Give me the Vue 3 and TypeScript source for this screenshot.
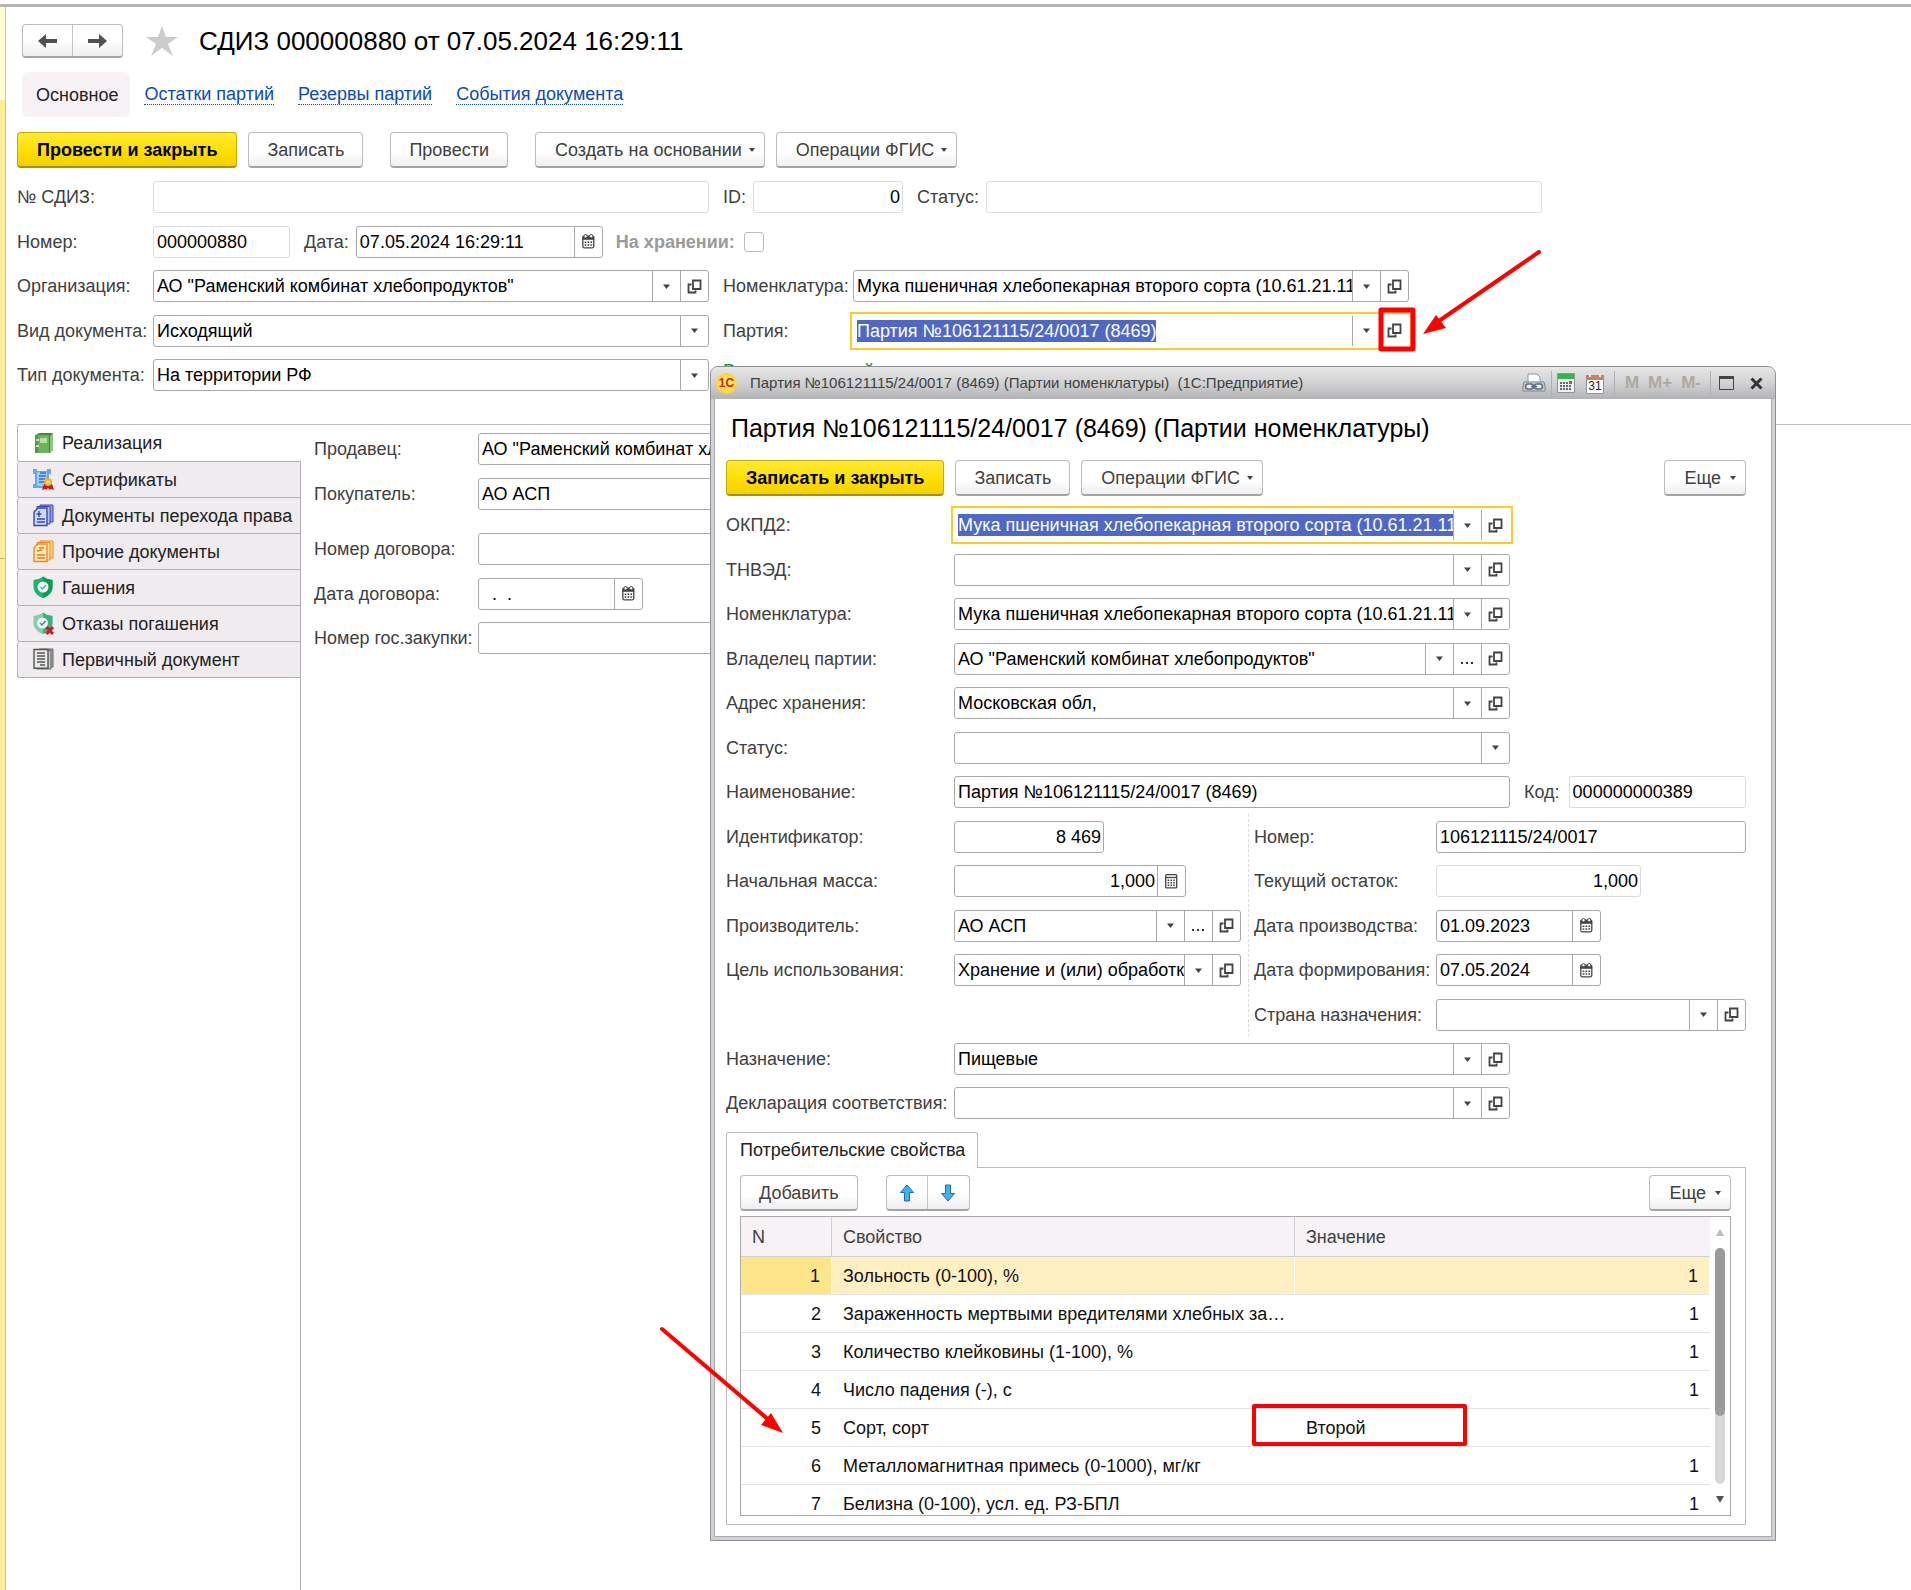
<script setup lang="ts">
import { defineComponent, h, ref, type PropType } from 'vue'

type Tool = 'drop' | 'open' | 'more' | 'date' | 'calc'

const toolIcons: Record<Tool, string> = {
  drop: '<path d="M5 6.500h7l-3.500 4.500z" fill="#444"/>',
  open: '<path d="M7 2.500h7.500v8.500H7z" fill="none" stroke="#444" stroke-width="1.800"/><path d="M5.500 6.500H2.500v8h7v-2" fill="none" stroke="#444" stroke-width="1.800"/>',
  more: '<path d="M2 12h2v2H2zM7 12h2v2H7zM12 12h2v2h-2z" fill="#333"/>',
  date: '<rect x="2.800" y="3.200" width="11" height="11.600" rx="1.500" fill="#fff" stroke="#444" stroke-width="1.300"/><path d="M2.500 3h11.600v3.800H2.500z" fill="#444"/><circle cx="5.500" cy="3.200" r="1.700" fill="#fff" stroke="#444"/><circle cx="11.200" cy="3.200" r="1.700" fill="#fff" stroke="#444"/><path d="M4.600 8.400h1.700v1.500H4.600zM7.500 8.400h1.700v1.500H7.500zM10.400 8.400h1.700v1.500h-1.700zM4.600 11.300h1.700v1.500H4.600zM7.500 11.300h1.700v1.500H7.500zM10.400 11.300h1.700v1.500h-1.700z" fill="#444"/>',
  calc: '<rect x="2.700" y="1.700" width="11" height="13.200" rx="1" fill="#fff" stroke="#444" stroke-width="1.300"/><path d="M3 4.500h10.500" stroke="#444" stroke-width="1.300"/><path d="M4.600 6.500h1.600v1.600H4.600zM7.400 6.500H9v1.600H7.400zM10.200 6.500h1.600v1.600h-1.600zM4.600 9h1.600v1.600H4.600zM7.400 9H9v1.600H7.400zM10.200 9h1.600v1.600h-1.600zM4.600 11.500h1.600v1.600H4.600zM7.400 11.500H9v1.600H7.400zM10.200 11.500h1.600v1.600h-1.600z" fill="#444"/>',
}

const toolNames: Record<Tool, string> = {
  drop: 'Выбрать из списка',
  open: 'Открыть',
  more: 'Показать все',
  date: 'Календарь',
  calc: 'Калькулятор',
}

const toolSvg = (tool: Tool) =>
  h('svg', { width: 17, height: 17, viewBox: '0 0 17 17', 'aria-hidden': 'true', innerHTML: toolIcons[tool] })

/* Input with its attached buttons: list, open card, calendar and so on. */
const Field = defineComponent({
  props: {
    id: { type: String, required: true },
    value: { type: String, default: '' },
    tools: { type: Array as PropType<Tool[]>, default: () => [] },
    list: Boolean,
    pale: Boolean,
    numeric: Boolean,
    active: Boolean,
  },
  setup(props) {
    return () =>
      h(
        'div',
        { class: ['field', { pale: props.pale, numeric: props.numeric, active: props.active }] },
        props.list
          ? [
              h('select', { id: props.id, class: 'control' }, [h('option', props.value)]),
              h('span', { class: 'tool passive' }, [toolSvg('drop')]),
            ]
          : [
              h('div', { class: 'slot' }, [
                h('input', { id: props.id, class: 'control', type: 'text', value: props.value, readonly: props.pale }),
              ]),
              ...props.tools.map((tool) =>
                h('button', { type: 'button', class: 'tool', 'aria-label': toolNames[tool] }, [toolSvg(tool)]),
              ),
            ],
      )
  },
})

const links = ['Остатки партий', 'Резервы партий', 'События документа']

const sections = [
  {
    title: 'Реализация',
    icon: '<path d="M4 3l3-2h14v17l-3 3H4z" fill="#3f8a3a"/><path d="M18 4l3-3v17l-3 3z" fill="#8fc57f"/><path d="M3 3h14v18H3z" fill="#6db35b"/><path d="M3 3h3v18H3z" fill="#4d9a45"/><path d="M8 6h7v5H8z" fill="#b9dfa8"/><path d="M4 8h3M4 14h3" stroke="#e3f5dc" stroke-width="1.500"/>',
  },
  {
    title: 'Сертификаты',
    icon: '<path d="M1 1h4v2h10V1h4v5h-2v10h2v4H1v-4h2V6H1z" fill="#64a8f0"/><path d="M5 4h10v14H5z" fill="#9ccaf8"/><path d="M8 5h6M7 8h7M7 11h6M7 14h5" stroke="#2f74c8" stroke-width="1.500"/><path d="M12 16l-2 6 3-1 2 1 1-3 1 3 2-1 3 1-2-6z" fill="#c41a1f"/><circle cx="16" cy="14" r="4" fill="#f2b01e"/><circle cx="16" cy="14" r="1.800" fill="#fbe08a"/>',
  },
  {
    title: 'Документы перехода права',
    icon: '<path d="M8 1h13v17H8z" fill="#8f9ce8" stroke="#3b46b4"/><path d="M5 2.500h13V20H5z" fill="#b9c2f4" stroke="#3b46b4"/><path d="M2 8l4-4h9v17.500H2z" fill="#c9dcf7" stroke="#3b46b4" stroke-width="1.400"/><path d="M7 7v6M4.500 10h5M5 15h8M5 18h8" stroke="#3b46b4" stroke-width="1.400"/>',
  },
  {
    title: 'Прочие документы',
    icon: '<path d="M8 1h13v17H8z" fill="#ffd08a" stroke="#f08a1e"/><path d="M5 2.500h13V20H5z" fill="#ffe0ae" stroke="#f08a1e"/><path d="M2 8l4-4h9v17.500H2z" fill="#ffe9bf" stroke="#f08a1e" stroke-width="1.400"/><path d="M5 11l5-1M7 8h5M5 15h8M5 18h8" stroke="#e87a10" stroke-width="1.400"/>',
  },
  {
    title: 'Гашения',
    icon: '<path d="M11 .500C8 3 5 3.500 1.500 4v7c0 5 4 9 9.500 11 5.500-2 9.500-6 9.500-11V4C17 3.500 14 3 11 .500z" fill="#17b765"/><path d="M11 .500C14 3 17 3.500 20.500 4v7c0 5-4 9-9.500 11z" fill="#0c9c52"/><circle cx="11" cy="11" r="5.500" fill="#f2f8fb"/><path d="M8.500 11l2 2 3.500-4" fill="none" stroke="#7a9cc0" stroke-width="1.500"/>',
  },
  {
    title: 'Отказы погашения',
    icon: '<path d="M11 .500C8 3 5 3.500 1.500 4v7c0 5 4 9 9.500 11 5.500-2 9.500-6 9.500-11V4C17 3.500 14 3 11 .500z" fill="#7fcfa8"/><path d="M11 .500C14 3 17 3.500 20.500 4v7c0 5-4 9-9.500 11z" fill="#3fae80"/><circle cx="10.500" cy="11" r="5.500" fill="#eaf4f5"/><path d="M8 11l2 2 3.500-4" fill="none" stroke="#5b7f96" stroke-width="1.500"/><path d="M14.500 15l6.500 7M21 15l-6.500 7" stroke="#d01c1c" stroke-width="3"/>',
  },
  {
    title: 'Первичный документ',
    icon: '<path d="M7 1h14v18H7z" fill="#a8a8a8" stroke="#666"/><path d="M4.500 2.500H19V21H4.500z" fill="#c4c4c4" stroke="#666"/><path d="M2 1.500h14v18.800H2z" fill="#e9e9e9" stroke="#555" stroke-width="1.400"/><path d="M5 5h8M5 8h8M5 11h8M5 14h8M8 17h5" stroke="#555" stroke-width="1.400"/>',
  },
]
const activeSection = ref('Реализация')

const batchFields = [
  { id: 'b-okpd', label: 'ОКПД2:', value: 'Мука пшеничная хлебопекарная второго сорта (10.61.21.113)', tools: ['drop', 'open'] as Tool[], active: true },
  { id: 'b-tnved', label: 'ТНВЭД:', value: '', tools: ['drop', 'open'] as Tool[] },
  { id: 'b-item', label: 'Номенклатура:', value: 'Мука пшеничная хлебопекарная второго сорта (10.61.21.113)', tools: ['drop', 'open'] as Tool[] },
  { id: 'b-owner', label: 'Владелец партии:', value: 'АО "Раменский комбинат хлебопродуктов"', tools: ['drop', 'more', 'open'] as Tool[] },
  { id: 'b-address', label: 'Адрес хранения:', value: 'Московская обл,', tools: ['drop', 'open'] as Tool[] },
]

const properties = [
  { n: 1, name: 'Зольность (0-100), %', value: '1' },
  { n: 2, name: 'Зараженность мертвыми вредителями хлебных запасов', value: '1' },
  { n: 3, name: 'Количество клейковины (1-100), %', value: '1' },
  { n: 4, name: 'Число падения (-), с', value: '1' },
  { n: 5, name: 'Сорт, сорт', value: 'Второй' },
  { n: 6, name: 'Металломагнитная примесь (0-1000), мг/кг', value: '1' },
  { n: 7, name: 'Белизна (0-100), усл. ед. РЗ-БПЛ', value: '1' },
]
const currentRow = ref(1)
</script>

<template>
  <div class="app">
    <div class="topline"></div>
    <div class="workspace">
      <div class="strip"><i class="strip-head"></i><i class="strip-mid"></i></div>

      <main class="document">
        <header class="heading">
          <div class="pair history">
            <button type="button" aria-label="Назад">
              <svg width="20" height="16" viewBox="0 0 20 16"><path d="M0 8l8-7v5h11v4H8v5z" fill="#505050" /></svg>
            </button>
            <button type="button" aria-label="Вперед">
              <svg width="20" height="16" viewBox="0 0 20 16"><path d="M19 8l-8-7v5H0v4h11v5z" fill="#505050" /></svg>
            </button>
          </div>
          <button type="button" class="star" aria-label="В избранное">
            <svg width="32" height="30" viewBox="0 0 32 30"><path d="M16 0l4 11h12l-10 7 5 12-11-8-11 8 5-12L0 11h12z" fill="#cbcccd" /></svg>
          </button>
          <h1>СДИЗ 000000880 от 07.05.2024 16:29:11</h1>
        </header>

        <nav class="links">
          <span class="here">Основное</span>
          <a v-for="link in links" :key="link" href="#">{{ link }}</a>
        </nav>

        <div class="commands">
          <button type="button" class="btn primary">Провести и закрыть</button>
          <button type="button" class="btn">Записать</button>
          <button type="button" class="btn apart">Провести</button>
          <button type="button" class="btn menu apart">Создать на основании</button>
          <button type="button" class="btn menu">Операции ФГИС</button>
        </div>

        <form class="form main-form" @submit.prevent>
          <div class="row">
            <label class="lead" for="sdiz">№ СДИЗ:</label>
            <Field id="sdiz" class="wide" pale />
            <label class="next" for="ident">ID:</label>
            <Field id="ident" class="w150" value="0" pale numeric />
            <label class="next" for="status">Статус:</label>
            <Field id="status" class="wide" pale />
          </div>
          <div class="row">
            <label class="lead" for="number">Номер:</label>
            <Field id="number" class="w137" value="000000880" pale />
            <label class="next" for="date">Дата:</label>
            <Field id="date" class="w247" value="07.05.2024 16:29:11" :tools="['date']" />
            <label class="storage" for="storage">На хранении:</label>
            <input id="storage" class="tick" type="checkbox" disabled />
          </div>
          <div class="row">
            <label class="lead" for="org">Организация:</label>
            <Field id="org" class="wide" value='АО "Раменский комбинат хлебопродуктов"' :tools="['drop', 'open']" />
            <label class="second" for="item">Номенклатура:</label>
            <Field id="item" class="wide" value="Мука пшеничная хлебопекарная второго сорта (10.61.21.113)" :tools="['drop', 'open']" />
          </div>
          <div class="row">
            <label class="lead" for="kind">Вид документа:</label>
            <Field id="kind" class="wide" value="Исходящий" list />
            <label class="second" for="batch">Партия:</label>
            <Field id="batch" class="wide" value="Партия №106121115/24/0017 (8469)" :tools="['drop', 'open']" active />
          </div>
          <div class="row">
            <label class="lead" for="type">Тип документа:</label>
            <Field id="type" class="wide" value="На территории РФ" list />
            <span class="second group">Реквизиты партий</span>
          </div>
        </form>

        <section class="details">
          <div class="side" role="tablist">
            <button
              v-for="s in sections"
              :key="s.title"
              type="button"
              role="tab"
              class="section"
              :class="{ current: s.title === activeSection }"
              :aria-selected="s.title === activeSection"
              @click="activeSection = s.title"
            >
              <svg width="22" height="23" viewBox="0 0 22 23" v-html="s.icon"></svg>
              {{ s.title }}
            </button>
          </div>
          <div class="form sale-form">
            <div class="row">
              <label for="seller">Продавец:</label>
              <Field id="seller" class="wide" value='АО "Раменский комбинат хлебопродуктов"' :tools="['drop', 'open']" />
            </div>
            <div class="row">
              <label for="buyer">Покупатель:</label>
              <Field id="buyer" class="wide" value="АО АСП" :tools="['drop', 'open']" />
            </div>
            <div class="row spaced">
              <label for="contract">Номер договора:</label>
              <Field id="contract" class="wide" />
            </div>
            <div class="row">
              <label for="contract-date">Дата договора:</label>
              <Field id="contract-date" class="w165" value="  .  ." :tools="['date']" />
            </div>
            <div class="row">
              <label for="purchase">Номер гос.закупки:</label>
              <Field id="purchase" class="wide" />
            </div>
          </div>
        </section>
      </main>
    </div>

    <section class="window" role="dialog" aria-labelledby="window-title">
      <div class="titlebar">
        <span class="logo">1C</span>
        <span class="caption">Партия №106121115/24/0017 (8469) (Партии номенклатуры)&nbsp; (1С:Предприятие)</span>
        <button type="button" aria-label="Печать" class="print">
          <svg width="24" height="20" viewBox="0 0 24 20"><path d="M6 1h9l3 3v7H6z" fill="#fff" stroke="#8a9aa8" /><path d="M2 9h20l1 4v5H1v-5z" fill="#c9d2da" stroke="#75838f" /><rect x="3.500" y="11" width="8" height="5" rx="2.500" fill="#eef2f5" stroke="#5e6e7c" stroke-width="1.600" /><rect x="12.500" y="11" width="8" height="5" rx="2.500" fill="#eef2f5" stroke="#5e6e7c" stroke-width="1.600" /><path d="M9 13.500h6" stroke="#5e6e7c" stroke-width="1.600" /></svg>
        </button>
        <i class="bar"></i>
        <button type="button" aria-label="Калькулятор" class="calc">
          <svg width="18" height="20" viewBox="0 0 18 20"><path d="M.500 .500h17v19H.500z" fill="#eef0f1" stroke="#8d959a" /><path d="M1 1h16v5H1z" fill="#35b44a" /><path d="M3 9h2v2H3zM6 9h2v2H6zM9 9h2v2H9zM3 12h2v2H3zM6 12h2v2H6zM9 12h2v2H9zM12 12h2v2h-2zM3 15h2v2H3zM6 15h2v2H6zM9 15h2v2H9zM12 15h2v2h-2z" fill="#667" /><path d="M12 8h3v3h-3z" fill="#e23b32" /></svg>
        </button>
        <button type="button" aria-label="Календарь" class="calendar">
          <svg width="18" height="21" viewBox="0 0 18 21"><path d="M.500 2.500h17v18H.500z" fill="#fff" stroke="#8795a5" /><path d="M0 2h18v5H0z" fill="#c5845a" /><path d="M4 0v4M14 0v4" stroke="#f0e4da" stroke-width="2" /><text x="9" y="17" text-anchor="middle" font-size="12" font-family="Liberation Sans, sans-serif" fill="#222">31</text></svg>
        </button>
        <i class="bar"></i>
        <button type="button" class="memory">M</button>
        <button type="button" class="memory">M+</button>
        <button type="button" class="memory">M-</button>
        <i class="bar"></i>
        <button type="button" aria-label="Развернуть" class="maximize">
          <svg width="15" height="14" viewBox="0 0 15 14"><path d="M.500 .500h14v13H.500z" fill="none" stroke="#444" /><path d="M0 0h15v3H0z" fill="#444" /></svg>
        </button>
        <button type="button" aria-label="Закрыть" class="close">
          <svg width="13" height="13" viewBox="0 0 13 13"><path d="M1.500 1.500l10 10M11.500 1.500l-10 10" stroke="#333" stroke-width="3" /></svg>
        </button>
      </div>

      <div class="body">
        <h2 id="window-title">Партия №106121115/24/0017 (8469) (Партии номенклатуры)</h2>
        <div class="commands">
          <button type="button" class="btn primary">Записать и закрыть</button>
          <button type="button" class="btn">Записать</button>
          <button type="button" class="btn menu">Операции ФГИС</button>
          <button type="button" class="btn menu last">Еще</button>
        </div>

        <form class="form" @submit.prevent>
          <div v-for="f in batchFields" :key="f.id" class="row">
            <label class="lead" :for="f.id">{{ f.label }}</label>
            <Field :id="f.id" class="wide" :value="f.value" :tools="f.tools" :active="f.active" />
          </div>
          <div class="row">
            <label class="lead" for="b-status">Статус:</label>
            <Field id="b-status" class="wide" list />
          </div>
          <div class="row">
            <label class="lead" for="b-name">Наименование:</label>
            <Field id="b-name" class="wide" value="Партия №106121115/24/0017 (8469)" />
            <label class="code" for="b-code">Код:</label>
            <Field id="b-code" class="fill" value="000000000389" pale />
          </div>
          <div class="split">
            <div class="column">
              <div class="row">
                <label class="lead" for="b-id">Идентификатор:</label>
                <Field id="b-id" class="w150" value="8 469" numeric />
              </div>
              <div class="row">
                <label class="lead" for="b-mass">Начальная масса:</label>
                <Field id="b-mass" class="w232" value="1,000" :tools="['calc']" numeric />
              </div>
              <div class="row">
                <label class="lead" for="b-maker">Производитель:</label>
                <Field id="b-maker" class="fill" value="АО АСП" :tools="['drop', 'more', 'open']" />
              </div>
              <div class="row">
                <label class="lead" for="b-goal">Цель использования:</label>
                <Field id="b-goal" class="fill" value="Хранение и (или) обработка" :tools="['drop', 'open']" />
              </div>
            </div>
            <div class="column right">
              <div class="row">
                <label for="b-number">Номер:</label>
                <Field id="b-number" class="fill" value="106121115/24/0017" />
              </div>
              <div class="row">
                <label for="b-rest">Текущий остаток:</label>
                <Field id="b-rest" class="w205" value="1,000" pale numeric />
              </div>
              <div class="row">
                <label for="b-made">Дата производства:</label>
                <Field id="b-made" class="w165" value="01.09.2023" :tools="['date']" />
              </div>
              <div class="row">
                <label for="b-formed">Дата формирования:</label>
                <Field id="b-formed" class="w165" value="07.05.2024" :tools="['date']" />
              </div>
              <div class="row">
                <label for="b-country">Страна назначения:</label>
                <Field id="b-country" class="fill" :tools="['drop', 'open']" />
              </div>
            </div>
          </div>
          <div class="row short">
            <label class="lead" for="b-purpose">Назначение:</label>
            <Field id="b-purpose" class="wide" value="Пищевые" :tools="['drop', 'open']" />
          </div>
          <div class="row short">
            <label class="lead" for="b-decl">Декларация соответствия:</label>
            <Field id="b-decl" class="wide" :tools="['drop', 'open']" />
          </div>
        </form>

        <div class="tabs" role="tablist">
          <button type="button" role="tab" class="tab" aria-selected="true">Потребительские свойства</button>
        </div>
        <div class="pane">
          <div class="commands">
            <button type="button" class="btn">Добавить</button>
            <div class="pair order">
              <button type="button" aria-label="Переместить вверх">
                <svg width="16" height="18" viewBox="0 0 16 18"><path d="M8 1l6.500 7.500h-4V17h-5V8.500h-4z" fill="#3fb0f0" stroke="#1b6fb0" /></svg>
              </button>
              <button type="button" aria-label="Переместить вниз">
                <svg width="16" height="18" viewBox="0 0 16 18"><path d="M8 17l6.500-7.500h-4V1h-5v8.500h-4z" fill="#3fb0f0" stroke="#1b6fb0" /></svg>
              </button>
            </div>
            <button type="button" class="btn menu last">Еще</button>
          </div>
          <div class="grid">
            <table>
              <thead>
                <tr><th class="num">N</th><th class="name">Свойство</th><th>Значение</th></tr>
              </thead>
              <tbody>
                <tr v-for="p in properties" :key="p.n" :class="{ selected: p.n === currentRow }" @click="currentRow = p.n">
                  <td class="num">{{ p.n }}</td>
                  <td class="name">{{ p.name }}</td>
                  <td :class="{ amount: p.value === '1' }">{{ p.value }}</td>
                </tr>
              </tbody>
            </table>
            <div class="scroll" aria-hidden="true">
              <svg width="8" height="7" viewBox="0 0 8 7"><path d="M0 7l4-7 4 7z" fill="#bbb" /></svg>
              <div class="track"><div class="thumb"></div></div>
              <svg width="8" height="7" viewBox="0 0 8 7"><path d="M0 0l4 7 4-7z" fill="#555" /></svg>
            </div>
          </div>
        </div>
      </div>
    </section>

    <svg class="marks" width="1560" height="1460" viewBox="0 0 1560 1460" aria-hidden="true">
      <g fill="none" stroke="#f00" stroke-width="4" stroke-linejoin="round" stroke-linecap="round">
        <rect x="1381" y="310" width="32" height="39" stroke-width="5" />
        <rect x="1254" y="1406" width="211" height="38" />
        <path d="M1539 252L1436 323" />
        <path d="M662 1329L770 1421" />
      </g>
      <path d="M1423 334L1436 315L1446 328zM783 1433L771 1413L761 1425z" fill="#f00" />
    </svg>
  </div>
</template>

<style>
body {
  margin: 0;
  background: #fff;
}
</style>

<style scoped>
.app {
  position: relative;
  display: flex;
  flex-direction: column;
  min-height: 100vh;
  overflow: hidden;
  background: #fff;
  color: #404040;
  font: 18px/22px 'Liberation Sans', Arial, sans-serif;
}
.app *,
.app :deep(*) {
  box-sizing: border-box;
}
.app button,
.app :deep(button),
.app :deep(input),
.app :deep(select) {
  font: inherit;
  color: inherit;
  margin: 0;
}
.topline {
  height: 3px;
  margin-top: 4px;
  background: #b4b4b8;
}
.workspace {
  flex: 1;
  display: flex;
}
.strip {
  display: flex;
  flex-direction: column;
  width: 6px;
  background: #ffed99;
  border-right: 1px solid #d8c67c;
}
.strip-head {
  height: 93px;
  background: #fffdd4;
}
.strip-mid {
  height: 459px;
  border-bottom: 1px solid #cdb866;
}
.document {
  flex: 1;
  display: flex;
  flex-direction: column;
  padding-left: 11px;
}

.heading {
  display: flex;
  align-items: center;
  padding: 17px 0 0 5px;
}
.pair {
  display: flex;
  border: 1px solid #bcbcbc;
  border-bottom: 2px solid #a4a4a4;
  border-radius: 4px;
  background: linear-gradient(#fff 50%, #f0eef0);
}
.pair button {
  flex: 1;
  display: flex;
  align-items: center;
  justify-content: center;
  padding: 0;
  border: 0;
  background: none;
}
.pair button + button {
  border-left: 1px solid #c4c4c4;
}
.history {
  width: 101px;
  height: 34px;
}
.star {
  display: flex;
  padding: 0;
  border: 0;
  background: none;
}
.app .star {
  margin-left: 23px;
}
h1,
h2 {
  margin: 0;
  color: #000;
  font-weight: 400;
  font-size: 26px;
  line-height: 34px;
}
h1 {
  margin-left: 21px;
}

.links {
  display: flex;
  align-items: center;
  gap: 24px;
  margin: 14px 0 0 5px;
}
.here {
  margin-right: -10px;
  padding: 12px 12px 11px 14px;
  border-radius: 6px;
  background: #f6f2f6;
  color: #222;
}
.links a {
  color: #0b4bb3;
  line-height: 20px;
  text-decoration: none;
  border-bottom: 1px dotted #0b4bb3;
}

.commands {
  display: flex;
  gap: 11px;
  margin-top: 15px;
}
.btn {
  height: 36px;
  padding: 0 18px;
  border: 1px solid #bcbcbc;
  border-bottom: 2px solid #a4a4a4;
  border-radius: 4px;
  background: linear-gradient(#fff 60%, #f0eef0);
  white-space: nowrap;
}
.btn.primary {
  padding: 0 19px;
  border-color: #c9ab00;
  border-bottom-color: #a68f00;
  background: linear-gradient(#ffea34, #fedd00 60%, #f0d000);
}
.app .btn.primary {
  color: #000;
  font-weight: 700;
}
.app .apart {
  margin-left: 16px;
}
.btn.menu {
  display: flex;
  align-items: center;
  gap: 7px;
  padding: 0 9px 0 19px;
}
.btn.menu::after {
  content: '';
  border: 3px solid transparent;
  border-top: 4px solid #444;
  border-bottom: 0;
}
.app .last {
  gap: 9px;
  margin-left: auto;
}

.row {
  display: flex;
  align-items: center;
  height: 44px;
  white-space: nowrap;
}
.row:nth-child(even) {
  height: 45px;
}
.wide {
  width: 556px;
}
.w137 {
  width: 137px;
}
.w150 {
  width: 150px;
}
.w165 {
  width: 165px;
}
.w205 {
  width: 205px;
}
.w232 {
  width: 232px;
}
.w247 {
  width: 247px;
}
.fill {
  flex: 1;
}
.app :deep(.field) {
  display: flex;
  min-width: 0;
  height: 32px;
  border: 1px solid #a9a9a9;
  border-radius: 3px;
  background: #fff;
  color: #000;
}
.app :deep(.field.pale) {
  border-color: #dcdcdc;
}
.app :deep(.field.active) {
  border-color: transparent;
  border-radius: 0;
  outline: 2px solid #fbcb28;
  outline-offset: 1px;
}
.app :deep(.slot) {
  flex: 1;
  display: flex;
  align-items: center;
  min-width: 0;
  padding-left: 3px;
}
.app :deep(.control) {
  flex: 1;
  min-width: 0;
  height: 22px;
  padding: 0;
  border: 0;
  outline: 0;
  background: none;
  appearance: none;
}
.app :deep(select.control) {
  height: 30px;
  padding-left: 3px;
}
.app :deep(.numeric .control) {
  padding-right: 2px;
  text-align: right;
}
.app :deep(.active .control) {
  flex: 0 1 auto;
  field-sizing: content;
  background: #4f68c6;
  color: #fff;
}
.app :deep(.tool) {
  flex: none;
  display: flex;
  align-items: center;
  justify-content: center;
  width: 28px;
  padding: 0;
  border: 0;
  border-left: 1px solid #a9a9a9;
  background: none;
}
.app :deep(.passive) {
  pointer-events: none;
}

.main-form {
  margin-top: 7px;
}
.main-form .lead {
  width: 136px;
}
.next {
  margin: 0 7px 0 14px;
}
.second {
  width: 130px;
  margin-left: 14px;
}
.group {
  align-self: flex-start;
  color: #0a9a3c;
  line-height: 36px;
}
.storage {
  margin: 0 9px 0 13px;
  color: #9a9a9a;
  font-weight: 700;
}
.tick {
  width: 20px;
  height: 20px;
  border: 1px solid #bdbdbd;
  border-radius: 3px;
  background: #fff;
  appearance: none;
}

.details {
  flex: 1;
  display: flex;
  margin-top: 27px;
  border-top: 1px solid #b9b9b9;
}
.side {
  width: 284px;
  border-right: 1px solid #b0b0b0;
}
.section {
  display: flex;
  align-items: center;
  gap: 8px;
  width: 100%;
  height: 36px;
  padding: 0 0 0 14px;
  border: 1px solid #b5b2b5;
  border-width: 0 0 1px 1px;
  border-radius: 3px 0 0 3px;
  background: #efebef;
  white-space: nowrap;
}
.app .section {
  color: #222;
}
.section.current {
  width: 284px;
  height: 37px;
  background: #fff;
}
.sale-form {
  padding: 2px 0 0 13px;
}
.sale-form label {
  width: 164px;
}
.spaced {
  margin-top: 11px;
}

.window {
  position: absolute;
  top: 366px;
  left: 710px;
  width: 1066px;
  border: 1px solid #8f9092;
  border-radius: 8px 8px 0 0;
  background: #d0d2d5;
}
.titlebar {
  display: flex;
  align-items: center;
  height: 32px;
  padding: 0 12px 0 5px;
  border-radius: 7px 7px 0 0;
  background: linear-gradient(#e6e6e7, #d2d2d4 50%, #b2b3b6);
}
.titlebar button {
  display: flex;
  padding: 0;
  border: 0;
  background: none;
}
.logo {
  width: 21px;
  border-radius: 50%;
  background: radial-gradient(#fff27a, #f8c61c);
  color: #d8200c;
  font-size: 12px;
  line-height: 21px;
  font-weight: 700;
  text-align: center;
}
.caption {
  margin: 0 auto 0 13px;
  font-size: 15px;
}
.bar {
  width: 1px;
  height: 24px;
  margin: 0 5px;
  background: #b0b0b2;
}
.app .calendar {
  margin: 0 5px 0 11px;
}
.app .titlebar .memory {
  margin: 0 4px 0 5px;
  color: #b0a79c;
  font-size: 17px;
  font-weight: 700;
}
.app .maximize {
  margin: 0 16px 0 3px;
}
.body {
  margin: 0 3px 3px;
  padding: 12px 25px 11px 11px;
  border: 1px solid #a8abaf;
  border-top: 0;
  background: #fff;
}
h2 {
  padding-left: 5px;
  font-size: 25px;
}
.body > .commands {
  margin-top: 15px;
}
.body .form {
  margin-top: 7px;
}
.body .lead {
  width: 228px;
}
.code {
  margin: 0 9px 0 14px;
}
.split {
  display: flex;
}
.column {
  width: 515px;
}
.column.right {
  flex: 1;
  width: auto;
  margin-left: 7px;
  padding-left: 5px;
  border-left: 1px dashed #dcdcdc;
}
.right label {
  width: 182px;
}
.column .row:nth-child(odd) {
  height: 45px;
}
.column .row:nth-child(even),
.row.short {
  height: 44px;
}
.tabs {
  display: flex;
  margin-top: 7px;
}
.tab {
  position: relative;
  height: 36px;
  padding: 0 12px 2px 13px;
  border: 1px solid #bdbdbd;
  border-bottom: 0;
  border-radius: 3px 3px 0 0;
  background: #fff;
}
.app .tab {
  margin-bottom: -1px;
  color: #222;
}
.pane {
  padding: 7px 14px 8px 13px;
  border: 1px solid #bdbdbd;
}
.pane .commands {
  margin: 0 0 5px;
}
.order {
  width: 84px;
  margin-left: 17px;
}
.grid {
  display: flex;
  height: 300px;
  border: 1px solid #a9a9a9;
  overflow: hidden;
}
table {
  flex: 1;
  height: 0;
  border-spacing: 0;
  table-layout: fixed;
  width: 0;
}
th,
td {
  height: 38px;
  padding: 0 11px;
  border-bottom: 1px solid #e4e4e4;
  overflow: hidden;
  text-overflow: ellipsis;
  white-space: nowrap;
}
td {
  color: #111;
}
th {
  height: 40px;
  border-bottom-color: #cfcfcf;
  border-right: 1px solid #d2d0d2;
  background: #f6f2f6;
  font-weight: 400;
  text-align: left;
}
th:last-child {
  border-right: 0;
}
.num {
  width: 91px;
}
.name {
  width: 463px;
}
td.name {
  padding-right: 4px;
}
td.num,
td.amount {
  text-align: right;
}
.selected td {
  border-right: 1px solid #fff;
  background: #fff0c4;
}
.selected .num {
  background: #ffe58a;
}
.scroll {
  display: flex;
  flex-direction: column;
  align-items: center;
  gap: 12px;
  width: 20px;
  padding: 12px 0;
}
.track {
  flex: 1;
  width: 10px;
  border-radius: 5px;
  background: #d8d8d8;
}
.thumb {
  width: 10px;
  height: 168px;
  border-radius: 5px;
  background: #9b999b;
}
.marks {
  position: absolute;
  top: 0;
  left: 0;
  pointer-events: none;
}
</style>
